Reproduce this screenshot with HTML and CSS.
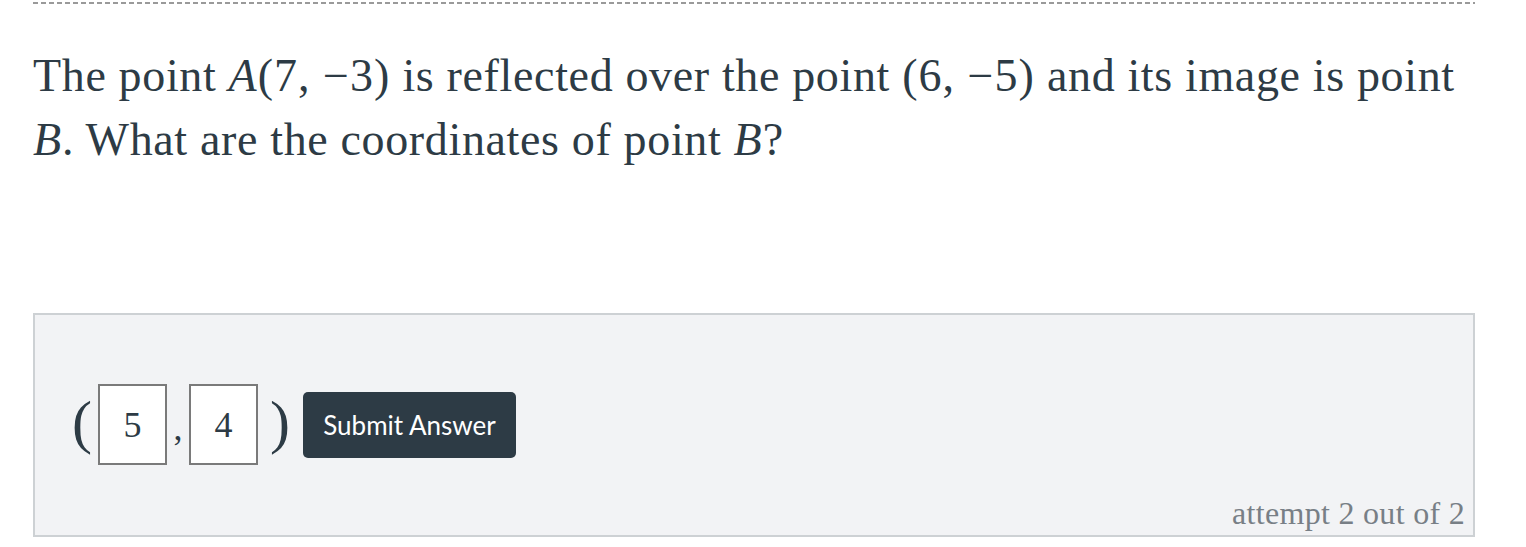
FILE: index.html
```html
<!DOCTYPE html>
<html lang="en">
<head>
    <meta charset="UTF-8">
    <title>Question</title>
    <link rel="stylesheet" href="styles.css">
</head>
<body>
    <div class="question">
        <div class="divider"></div>

        <!-- Prompt -->
        <p class="prompt">
            The point <span class="math"><i>A</i>(7, −3)</span> is reflected over the point <span class="math">(6, −5)</span> and its image is point<br>
            <span class="math"><i>B</i></span>. What are the coordinates of point <span class="math"><i>B</i></span>?
        </p>

        <!-- Answer area -->
        <div class="answer-box">
            <div class="answer-row">
                <span class="paren">(</span>
                <div class="blank">5</div>
                <span class="comma">,</span>
                <div class="blank">4</div>
                <span class="paren paren-close">)</span>
                <button class="submit-button">Submit Answer</button>
            </div>
            <div class="attempts">attempt 2 out of 2</div>
        </div>
    </div>
</body>
</html>
```

FILE: styles.css
```css
body {
    margin: 0;
    background-color: #ffffff;
    font-family: "Liberation Serif", "DejaVu Serif", serif;
    color: #2d3b45;
}

.question {
    padding: 2px 51px 0 33px;
}

.divider {
    height: 2px;
    background: repeating-linear-gradient(90deg, #9a9a9a 0 5px, transparent 5px 8px);
}

.prompt {
    margin: 40px 0 0 0;
    font-size: 46px;
    letter-spacing: 0.65px;
    line-height: 64px;
    white-space: nowrap;
}

.math {
    letter-spacing: 1px;
}

.math i {
    font-style: italic;
}

.answer-box {
    margin-top: 141px;
    height: 224px;
    box-sizing: border-box;
    border: 2px solid #cdd1d4;
    background-color: #f2f3f5;
    padding: 69px 8px 4px 37px;
    display: flex;
    flex-direction: column;
    justify-content: space-between;
}

.answer-row {
    display: flex;
    align-items: center;
}

.paren {
    font-size: 60px;
    line-height: 1;
    margin-right: 6px;
    margin-top: -6px;
}

.paren-close {
    margin: -6px 13px 0 12px;
}

.blank {
    width: 69px;
    height: 81px;
    box-sizing: border-box;
    border: 2px solid #7a7a7a;
    background-color: #ffffff;
    display: flex;
    align-items: center;
    justify-content: center;
    font-size: 36px;
}

.comma {
    width: 22px;
    font-size: 36px;
    text-align: center;
    margin-top: 6px;
}

.submit-button {
    width: 213px;
    height: 66px;
    border: none;
    border-radius: 5px;
    background-color: #2d3b45;
    color: #ffffff;
    font-family: Lato, "Liberation Sans", sans-serif;
    font-size: 26px;
    padding: 0;
}

.attempts {
    align-self: flex-end;
    font-size: 32px;
    letter-spacing: 0.3px;
    line-height: 1.1;
    color: #787f86;
}
```
